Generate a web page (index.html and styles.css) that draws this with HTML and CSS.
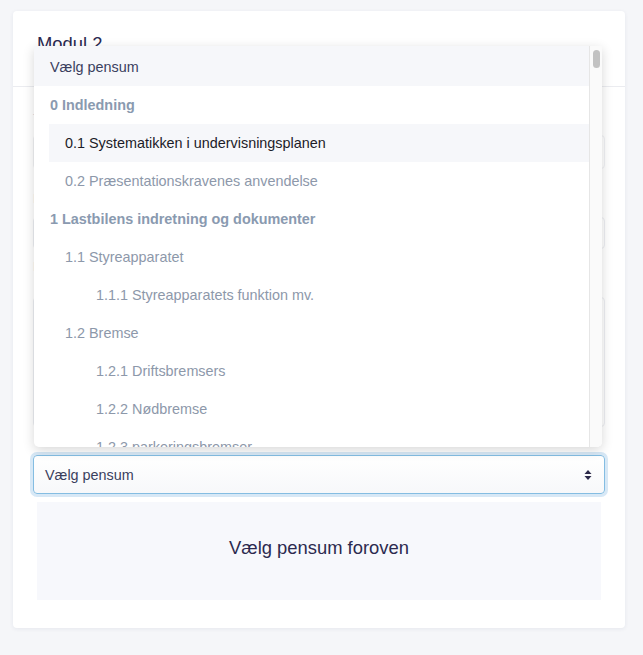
FILE: index.html
```html
<!DOCTYPE html>
<html lang="da">
<head>
<meta charset="utf-8">
<title>Modul 2</title>
<link rel="stylesheet" href="styles.css">
</head>
<body>
<div class="card">
  <div class="card-header">
    <h2 class="title">Modul 2</h2>
  </div>
  <div class="card-body">
    <div class="fields">
      <div class="field-label l1">Titel</div>
      <div class="input i1"></div>
      <div class="field-label l2">Beskrivelse</div>
      <div class="input i2"></div>
      <div class="field-label l3">Noter</div>
      <div class="input i3"></div>
    </div>
    <div class="select">
      <span class="select-text">Vælg pensum</span>
      <svg class="select-arrows" width="8" height="12" viewBox="0 0 8 12"><path d="M4 1 L7.5 5 L0.5 5 Z M4 11 L7.5 7 L0.5 7 Z" fill="#2c2a4a"/></svg>
    </div>
    <div class="placeholder">Vælg pensum foroven</div>
  </div>

  <div class="dropdown">
    <ul class="options">
      <li class="opt first">Vælg pensum</li>
      <li class="opt group">0 Indledning</li>
      <li class="opt l2 active">0.1 Systematikken i undervisningsplanen</li>
      <li class="opt l2">0.2 Præsentationskravenes anvendelse</li>
      <li class="opt group">1 Lastbilens indretning og dokumenter</li>
      <li class="opt l2">1.1 Styreapparatet</li>
      <li class="opt l3">1.1.1 Styreapparatets funktion mv.</li>
      <li class="opt l2">1.2 Bremse</li>
      <li class="opt l3">1.2.1 Driftsbremsers</li>
      <li class="opt l3">1.2.2 Nødbremse</li>
      <li class="opt l3">1.2.3 parkeringsbremser</li>
    </ul>
    <div class="scrollbar"><div class="thumb"></div></div>
  </div>
</div>
</body>
</html>
```
FILE: styles.css
```css
* { box-sizing: border-box; }
html, body { margin: 0; padding: 0; }
body {
  background: #f5f6f9;
  font-family: "Liberation Sans", Arial, sans-serif;
  padding: 11px 18px 0 13px;
  height: 655px;
  overflow: hidden;
}
.card {
  position: relative;
  width: 612px;
  background: #ffffff;
  border-radius: 4px;
  box-shadow: 0 1px 4px rgba(30, 40, 80, 0.07);
}
.card-header {
  height: 76px;
  padding: 22px 24px 0;
  border-bottom: 1px solid #ebecf0;
}
.title {
  margin: 0;
  font-size: 18.4px;
  font-weight: 400;
  line-height: 22px;
  color: #2a2950;
}
.card-body {
  padding: 20px 20px 28px;
}
.fields {
  height: 348px;
  display: flex;
  flex-direction: column;
  padding-top: 6px;
}
.field-label {
  font-size: 13px;
  color: #d6d9df;
  height: 12px;
  line-height: 12px;
}
.field-label.l1 { margin-bottom: 10px; }
.field-label.l2 { margin-bottom: 12px; }
.field-label.l3 { margin-bottom: 24px; }
.input {
  border: 1px solid #eceef2;
  border-radius: 4px;
}
.input.i1 { height: 34px; margin-bottom: 24px; border-color: #f0f1f4; }
.input.i2 { height: 32px; margin-bottom: 12px; }
.input.i3 { height: 130px; }
.select {
  height: 39px;
  display: flex;
  align-items: center;
  justify-content: space-between;
  padding: 1px 12px 0 11px;
  border: 1px solid #84bde2;
  border-radius: 4px;
  background: linear-gradient(#ffffff, #f7f8fa);
  box-shadow: 0 0 0 3px rgba(140, 190, 228, 0.35);
}
.select-text {
  font-size: 14.4px;
  color: #3b3f5e;
}
.select-arrows { display: block; }
.placeholder {
  margin: 8px 4px 0;
  height: 98px;
  padding-bottom: 6px;
  background: #f7f8fc;
  display: flex;
  align-items: center;
  justify-content: center;
  font-size: 18.4px;
  color: #2c2a4f;
}
.dropdown {
  position: absolute;
  left: 21px;
  top: 35px;
  width: 568px;
  height: 401px;
  display: flex;
  background: #ffffff;
  border-radius: 0 0 5px 5px;
  box-shadow: 0 3px 12px rgba(0, 0, 0, 0.16);
  overflow: hidden;
}
.options {
  list-style: none;
  margin: 0;
  padding: 0;
  flex: 1;
  overflow: hidden;
}
.opt {
  height: 38px;
  line-height: 39px;
  font-size: 14.4px;
  color: #8d98aa;
  padding-left: 16px;
  white-space: nowrap;
}
.opt.first {
  height: 40px;
  line-height: 42px;
  background: #f6f7fa;
  color: #3b3f5e;
}
.opt.group {
  font-weight: 700;
  color: #8a9ab0;
}
.opt.l2 {
  margin-left: 15px;
  padding-left: 16px;
}
.opt.l3 {
  margin-left: 15px;
  padding-left: 47px;
}
.opt.active {
  background: #f6f7fa;
  color: #1c1c28;
}
.scrollbar {
  width: 13px;
  background: #fafafa;
  border-left: 1px solid #e6e6e6;
  padding: 4px 0 0 3px;
}
.thumb {
  width: 7px;
  height: 18px;
  border-radius: 4px;
  background: #c2c2c2;
}
```
